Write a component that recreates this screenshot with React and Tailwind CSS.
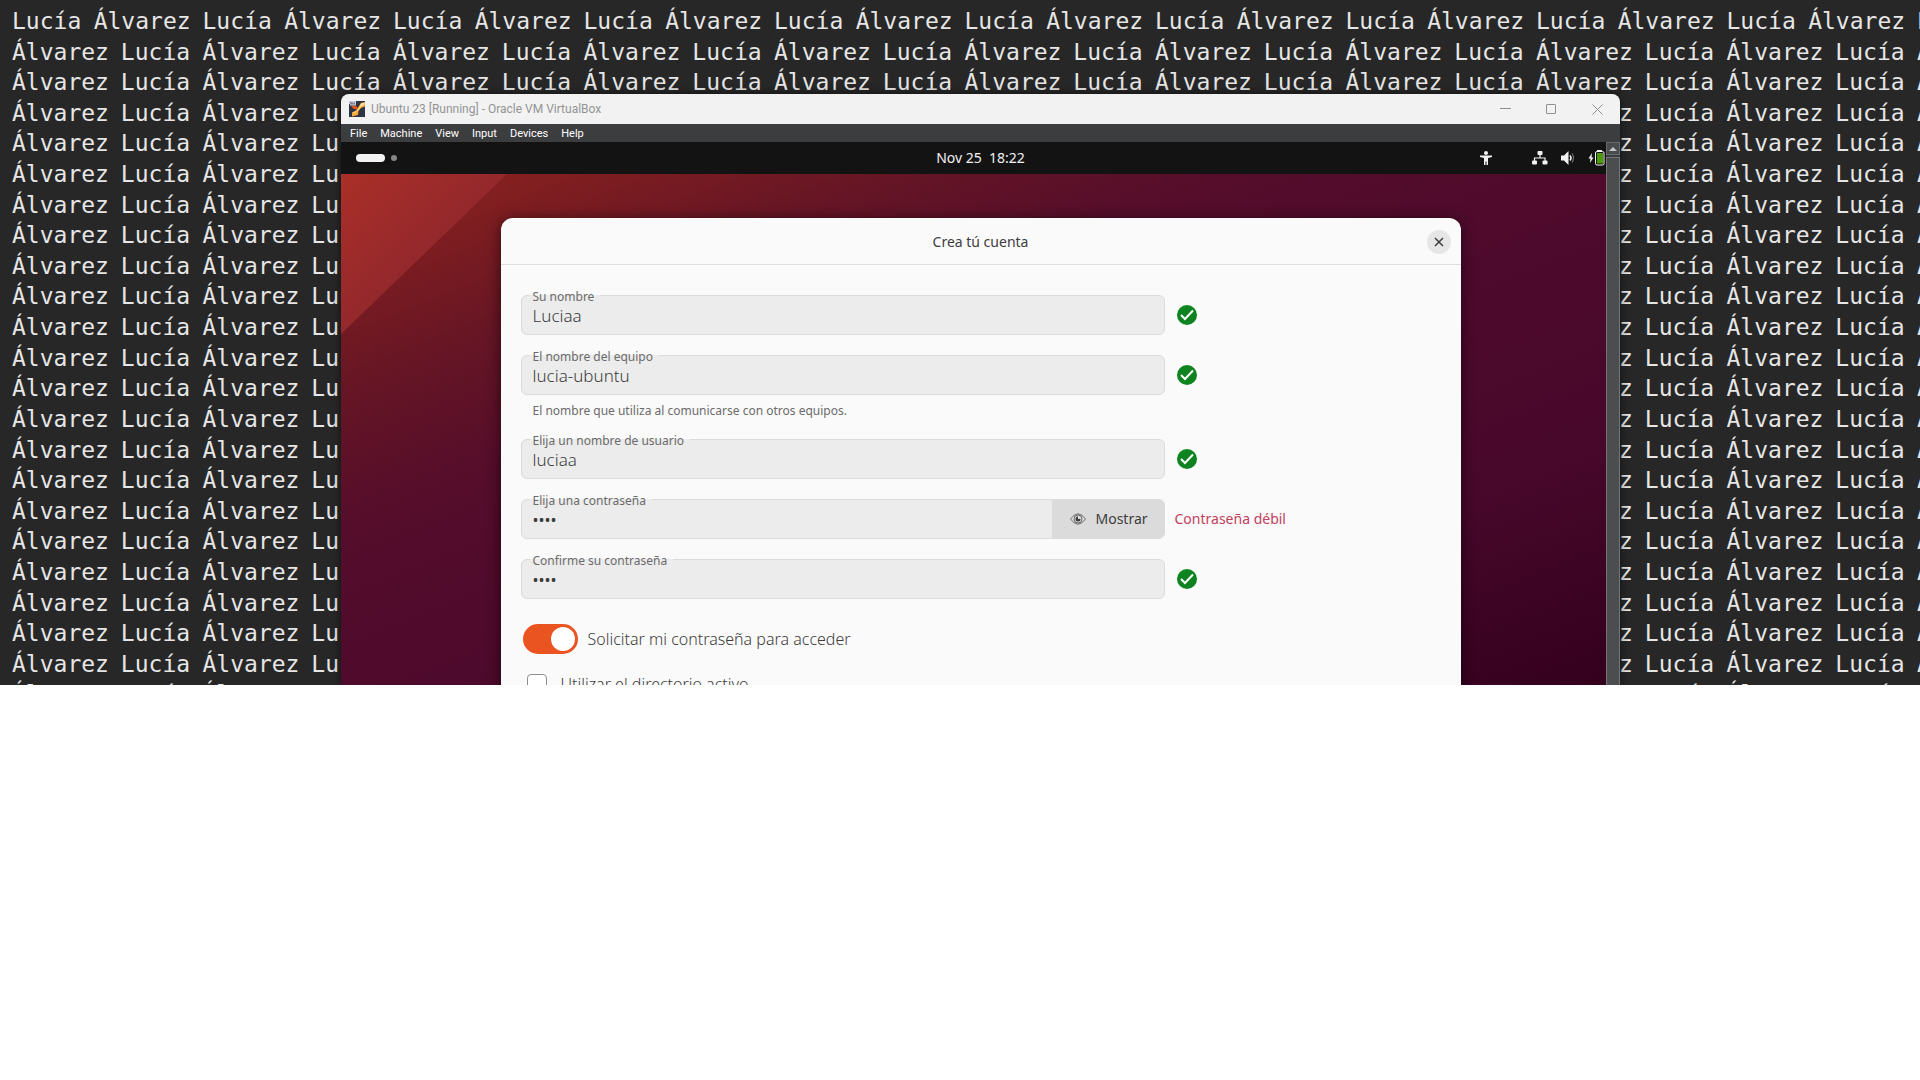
import React, { useState } from "react";

const ROWS = 23;
const PAIRS = 11;

const Terminal = () => {
  const rows = Array.from({ length: ROWS });
  const pairs = Array.from({ length: PAIRS });

  return (
    <div className="grid h-[709px] grid-rows-[repeat(23,1fr)] pt-[5px] pl-3 pr-[3px] font-['DejaVu_Sans_Mono',monospace] text-[23px] leading-8 text-[#e6e6e6]">
      {rows.map((_, row) => (
        <div key={row} className="flex min-h-0">
          {pairs.map((_, i) =>
            row === 0 ? (
              <p key={i} className="grid w-1/10 shrink-0 grid-cols-[3fr_4fr]">
                <span>Lucía </span>
                <span>Álvarez </span>
              </p>
            ) : (
              <p key={i} className="grid w-1/10 shrink-0 grid-cols-[4fr_3fr]">
                <span>Álvarez </span>
                <span>Lucía </span>
              </p>
            )
          )}
        </div>
      ))}
    </div>
  );
};

const VmIcon = () => (
  <svg viewBox="0 0 16 16" className="size-4">
    <rect width="16" height="16" fill="#2f3442" />
    <path d="M2.500 5L6 4.500L8.500 6.500L8 8.500L5 8L3 6.500Z" fill="#e2541b" />
    <path d="M10 5L12 2L16 1V5.500L12 7L9.500 10L9 14L3 15.500V11.500L7 9.500Z" fill="#f6a93a" />
    <path d="M12 2.500L15.500 1.500V3.500L12 5.500L8.500 10L4 12.500V11.500L7.500 10L10.500 6Z" fill="#fde0a0" />
    <path d="M0 0H7V4.500H1V3H0Z" fill="#c9ccd6" />
    <path d="M1 1.500H2V3H3V1.500M4 1.500V3.500M5.500 1.500V3.500" stroke="#4b5263" strokeWidth=".7" fill="none" />
  </svg>
);

const TitleBar = () => (
  <header className="flex h-[30px] items-center bg-[#f2f2f2] pl-2 text-[#8f8f8f]">
    <VmIcon />
    <h1 className="ml-[6px] flex-1 font-[Roboto,sans-serif] text-xs text-[#949494]">
      Ubuntu 23 [Running] - Oracle VM VirtualBox
    </h1>
    <div className="flex gap-[35px] pr-[17px]">
      <button aria-label="Minimize">
        <svg viewBox="0 0 11 11" className="size-[11px]" fill="none" stroke="currentColor">
          <path d="M0 4.500H11" />
        </svg>
      </button>
      <button aria-label="Maximize">
        <svg viewBox="0 0 11 11" className="size-[11px]" fill="none" stroke="currentColor">
          <rect x=".5" y=".5" width="9" height="9" rx=".5" />
        </svg>
      </button>
      <button aria-label="Close">
        <svg viewBox="0 0 11 11" className="size-[11px]" fill="none" stroke="currentColor">
          <path d="M.5 .5L10.500 10.500M10.500 .5L.5 10.500" />
        </svg>
      </button>
    </div>
  </header>
);

const menus = ["File", "Machine", "View", "Input", "Devices", "Help"];

const MenuBar = () => (
  <nav className="flex h-[18px] items-end gap-[13px] bg-[#3c3d3f] pl-[9px] font-[Roboto,sans-serif] text-[11px] leading-4 text-white">
    {menus.map((menu) => (
      <button key={menu}>{menu}</button>
    ))}
  </nav>
);

const TopBar = () => (
  <div className="grid h-8 grid-cols-[1fr_auto_1fr] items-center bg-[#131313] text-[#f2f2f2]">
    <div className="flex items-center gap-[6px] pl-[15px]">
      <span className="h-2 w-[29px] rounded-full bg-[#f2f2f2]" />
      <span className="size-[6px] rounded-full bg-[#868686]" />
    </div>
    <time className="text-sm whitespace-pre">Nov 25  18:22</time>
    <div className="flex items-center justify-end pr-[15px]">
      <svg viewBox="0 0 14 16" className="mr-[39px] h-4 w-[14px]" fill="currentColor">
        <circle cx="7" cy="3" r="2" />
        <path d="M1 5.500H13V7L9 8V15H7.500V11.500H6.500V15H5V8L1 7Z" />
      </svg>
      <svg viewBox="0 0 16 14" className="mr-[13px] h-[14px] w-4" fill="currentColor">
        <rect x="5.500" y="0" width="5" height="4" rx="1" />
        <rect x="0" y="9.500" width="5" height="4" rx="1" />
        <rect x="10.500" y="9.500" width="5" height="4" rx="1" />
        <path d="M8 4V7M2.500 10V7H13V10" fill="none" stroke="currentColor" strokeWidth="1.200" />
      </svg>
      <svg viewBox="0 0 16 14" className="mr-[11px] h-[14px] w-4" fill="none" stroke="currentColor">
        <path d="M0 4.500H3L7.500 0V14L3 9.500H0Z" fill="currentColor" stroke="none" />
        <path d="M9 4.500Q11 7 9 9.500" strokeWidth="1.500" />
        <path d="M11 2.500Q14 7 11 11.500" strokeWidth="1.200" opacity=".4" />
      </svg>
      <svg viewBox="0 0 17 16" className="h-4 w-[17px]">
        <path d="M4 3L.5 8.500H2.500L2 13L5.500 7.500H3.500Z" fill="#f2f2f2" />
        <rect x="9" y="0" width="5" height="2" fill="#f2f2f2" />
        <rect x="7.500" y="1.500" width="8.500" height="13.500" rx="1.500" fill="none" stroke="#f2f2f2" />
        <rect x="9" y="3" width="6" height="10.500" fill="#4e9a06" />
      </svg>
    </div>
  </div>
);

const Check = () => (
  <svg viewBox="0 0 20 20" className="size-5 ml-3" role="img" aria-label="Correcto">
    <circle cx="10" cy="10" r="10" fill="#0e8420" />
    <path d="M4 10L8 14L16 5.500" fill="none" stroke="#fff" strokeWidth="2" />
  </svg>
);

const Eye = () => (
  <svg viewBox="0 0 16 12" className="h-3 w-4" fill="none" stroke="currentColor">
    <path d="M.5 6Q8 -4.500 15.500 6Q8 16.500 .5 6Z" strokeWidth=".7" />
    <circle cx="8" cy="6" r="4" strokeWidth=".7" />
    <path d="M8 6V3.500A2.500 2.500 0 1 0 10.500 6Z" fill="currentColor" stroke="none" />
  </svg>
);

const Field = ({ id, label, value, onChange, type = "text", action, status }) => (
  <div className="flex items-center">
    <div className="relative flex h-10 w-[644px] rounded-md border border-[#dbdbdb] bg-[#ececec]">
      <label
        htmlFor={id}
        className="absolute left-2 -top-[6px] bg-linear-to-b from-[#fafafa] from-[5px] to-[#ececec] to-[5px] pr-[6px] pl-[3px] text-xs leading-[14px] text-[#6b6b6b]"
      >
        {label}
      </label>
      <input
        id={id}
        type={type}
        value={value}
        onChange={(e) => onChange(e.target.value)}
        className={`min-w-0 flex-1 bg-transparent pt-[2px] pl-[11px] text-[#3d3d3d] outline-none ${
          type === "password" ? "text-base" : "text-[17px] font-light"
        }`}
      />
      {action}
    </div>
    {status}
  </div>
);

const Dialog = () => {
  const [form, setForm] = useState({
    name: "Luciaa",
    host: "lucia-ubuntu",
    user: "luciaa",
    password: "1234",
    confirm: "1234",
  });
  const [visible, setVisible] = useState(false);
  const [askPassword, setAskPassword] = useState(true);
  const [directory, setDirectory] = useState(false);

  const update = (key) => (value) => setForm((prev) => ({ ...prev, [key]: value }));

  return (
    <section className="mx-auto mt-11 w-[960px] rounded-t-xl bg-[#fafafa] text-[#3d3d3d] shadow-[0_2px_14px_rgba(0,0,0,0.6)]">
      <div className="grid h-[47px] grid-cols-[1fr_auto_1fr] items-center border-b border-[#dedede] px-[10px] pt-[2px]">
        <h2 className="col-start-2 text-sm">Crea tú cuenta</h2>
        <button
          aria-label="Cerrar"
          className="flex size-6 items-center justify-center justify-self-end rounded-full bg-[#e6e6e6]"
        >
          <svg viewBox="0 0 10 10" className="size-[10px]" fill="none" stroke="currentColor" strokeWidth="1.500">
            <path d="M1 1L9 9M9 1L1 9" />
          </svg>
        </button>
      </div>

      <form className="flex flex-col gap-5 px-5 pt-[30px]">
        <Field id="name" label="Su nombre" value={form.name} onChange={update("name")} status={<Check />} />
        <div>
          <Field
            id="host"
            label="El nombre del equipo"
            value={form.host}
            onChange={update("host")}
            status={<Check />}
          />
          <p className="pt-2 pl-3 text-xs leading-4 text-[#6b6b6b]">
            El nombre que utiliza al comunicarse con otros equipos.
          </p>
        </div>
        <Field
          id="user"
          label="Elija un nombre de usuario"
          value={form.user}
          onChange={update("user")}
          status={<Check />}
        />
        <Field
          id="password"
          label="Elija una contraseña"
          type={visible ? "text" : "password"}
          value={form.password}
          onChange={update("password")}
          action={
            <button
              type="button"
              onClick={() => setVisible(!visible)}
              className="flex w-28 items-center gap-[10px] rounded-r-[5px] bg-[#dbdbdb] pl-[18px] text-sm"
            >
              <Eye />
              Mostrar
            </button>
          }
          status={<p className="ml-[10px] text-sm text-[#c0405c]">Contraseña débil</p>}
        />
        <Field
          id="confirm"
          label="Confirme su contraseña"
          type="password"
          value={form.confirm}
          onChange={update("confirm")}
          status={<Check />}
        />

        <label className="mt-[5px] flex items-center gap-[10px] pl-[2px] text-base leading-[30px] font-light">
          <input
            type="checkbox"
            role="switch"
            checked={askPassword}
            onChange={(e) => setAskPassword(e.target.checked)}
            className="h-[30px] w-[55px] appearance-none rounded-full bg-[#bbb] px-[3px] py-[3px] before:block before:size-6 before:rounded-full before:bg-white checked:bg-[#e95420] checked:before:ml-auto"
          />
          Solicitar mi contraseña para acceder
        </label>
        <label className="flex items-center gap-[14px] pl-[6px] text-base leading-5 font-light">
          <input
            type="checkbox"
            checked={directory}
            onChange={(e) => setDirectory(e.target.checked)}
            className="size-5 appearance-none rounded-[4px] border border-[#8e8e8e] bg-white checked:bg-[#e95420]"
          />
          Utilizar el directorio activo
        </label>
      </form>
    </section>
  );
};

const Scrollbar = () => (
  <div className="absolute inset-y-0 right-0 flex w-[14px] flex-col gap-[2px] bg-[#3c3d3f]">
    <button
      aria-label="Scroll up"
      className="flex h-[13px] items-center justify-center border border-[#6a6b6c] bg-[#4a4b4c]"
    >
      <svg viewBox="0 0 8 4" className="h-1 w-2" fill="#c8c8c8">
        <path d="M4 0L8 4H0Z" />
      </svg>
    </button>
    <div className="flex-1 border border-b-0 border-[#747576] bg-[#4c4d4e]" />
  </div>
);

const App = () => {
  return (
    <main className="min-h-screen bg-white font-['Noto_Sans',sans-serif]">
      <div className="relative h-[685px] overflow-hidden bg-[#272727]">
        <Terminal />

        <div className="absolute top-[94px] right-[300px] bottom-0 left-[341px] flex flex-col overflow-hidden rounded-t-lg shadow-[0_0_8px_rgba(0,0,0,0.6)]">
          <TitleBar />
          <MenuBar />
          <div className="relative flex min-h-0 flex-1 flex-col">
            <TopBar />
            <div className="relative min-h-0 flex-1 overflow-hidden bg-[linear-gradient(to_bottom_right,#92231f,#86201f_6%,#651525_22%,#550d2b_35%,#4f0a2c_50%,#48082b_75%,#33001c)]">
              <svg viewBox="0 0 166 160" className="absolute top-0 left-0 h-40 w-[166px]">
                <defs>
                  <linearGradient id="corner" x1="0" y1="0" x2="1" y2="1">
                    <stop offset="0" stopColor="#aa2f28" />
                    <stop offset=".5" stopColor="#94282c" />
                  </linearGradient>
                </defs>
                <path d="M0 0H166L0 160Z" fill="url(#corner)" />
              </svg>
              <div className="relative">
                <Dialog />
              </div>
            </div>
            <Scrollbar />
          </div>
        </div>
      </div>
    </main>
  );
};

export default App;
